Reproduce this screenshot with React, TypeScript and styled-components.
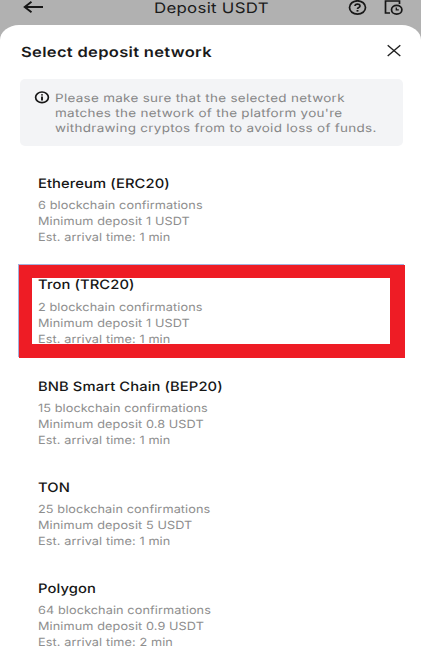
import React from "react";
import styled, { createGlobalStyle } from "styled-components";

const GlobalStyle = createGlobalStyle`
  * { box-sizing: border-box; }
  body { margin: 0; background: #b1b1b1; font-family: Inter, "Liberation Sans", sans-serif; text-rendering: geometricPrecision; }
`;

const Screen = styled.main`
  width: 421px;
  height: 669px;
  overflow: hidden;
  display: flex;
  flex-direction: column;
  background: #b1b1b1;
`;

const TopBar = styled.header`
  height: 25px;
  flex: none;
  display: grid;
  grid-template-columns: 154px 1fr auto;
  padding-right: 18px;
  color: #1b1b1b;
`;

const BackIcon = styled.svg`
  display: block;
  margin: 0 0 0 22px;
`;

const Actions = styled.div`
  display: flex;
  gap: 17px;
`;

const Wide = styled.span<{ $scale: number }>`
  display: block;
  width: max-content;
  white-space: nowrap;
  transform: scaleX(${(p) => p.$scale});
  transform-origin: 0 50%;
`;

const PageTitle = styled.div`
  padding-top: 1px;
  font-size: 14.5px;
  line-height: 16px;
  letter-spacing: 0.25px;
`;

const Sheet = styled.section`
  flex: 1;
  background: #fff;
  border-radius: 19px 19px 0 0 / 15px 15px 0 0;
  padding: 0 18px 0 20px;
`;

const SheetHeader = styled.div`
  height: 54px;
  display: flex;
  justify-content: space-between;
  padding-top: 17px;
`;

const SheetTitle = styled.h1`
  margin: 0;
  padding: 1px 0 0 0.5px;
  font-size: 14px;
  line-height: 20px;
  font-weight: 600;
  letter-spacing: 0.27px;
  color: #1a1a1a;
`;

const CloseIcon = styled.svg`
  display: block;
  margin: 2px 1px 0 0;
`;

const Notice = styled.div`
  height: 67px;
  border-radius: 5px;
  background: #f3f4f6;
  display: flex;
  padding: 11px 0 0 14px;
`;

const NoticeIcon = styled.svg`
  display: block;
  flex: none;
  margin: 1px 5px 0 0;
`;

const NoticeText = styled.div`
  padding-top: 0.7px;
  font-size: 11.5px;
  line-height: 15.2px;
  letter-spacing: 0.25px;
  color: #868686;
`;

const NetworkList = styled.div`
  padding: 29px 0 0 18px;
`;

const Network = styled.article`
  position: relative;
  height: 101.25px;
`;

const NetworkName = styled.h2`
  margin: 0;
  font-size: 13px;
  line-height: 18px;
  font-weight: 450;
  letter-spacing: 0.08px;
  color: #161616;
`;

const Details = styled.div`
  margin-top: 4.4px;
  font-size: 11.2px;
  line-height: 16px;
  letter-spacing: 0.08px;
  color: #8e8e8e;
`;

const Highlight = styled.div`
  position: absolute;
  left: -19px;
  top: -11.25px;
  width: 386px;
  height: 93px;
  border: solid #ee1c25;
  border-width: 13px 15px 14px 13px;
  box-shadow: -1px -1px 0 #a5b1dc;
`;

const networks = [
  { name: "Ethereum (ERC20)", confirmations: 6, minimum: "1", minutes: 1 },
  { name: "Tron (TRC20)", confirmations: 2, minimum: "1", minutes: 1, highlighted: true },
  { name: "BNB Smart Chain (BEP20)", confirmations: 15, minimum: "0.8", minutes: 1 },
  { name: "TON", confirmations: 25, minimum: "5", minutes: 1 },
  { name: "Polygon", confirmations: 64, minimum: "0.9", minutes: 2 },
];

export default function App() {
  return (
    <>
      <GlobalStyle />
      <Screen>
        <TopBar>
          <BackIcon width="22" height="14" viewBox="0 0 22 14" fill="none" stroke="#171717" strokeWidth="1.9">
            <path d="M21 7H2.5M9.5 1.7 2.7 7 9.5 12.3" />
          </BackIcon>
          <PageTitle><Wide $scale={1.16}>Deposit USDT</Wide></PageTitle>
          <Actions>
            <svg width="19" height="16" viewBox="0 0 19 16" fill="none" stroke="#171717" strokeWidth="1.7">
              <ellipse cx="9.5" cy="7.5" rx="8" ry="6.7" />
              <path d="M7 6.1C7 3.4 12 3.4 12 6c0 1.7-2.5 1.4-2.5 3" />
              <path d="M9.5 10v1.6" strokeWidth="1.9" />
            </svg>
            <svg width="19" height="16" viewBox="0 0 19 16" fill="none" stroke="#171717" strokeWidth="1.7">
              <path d="M15.5 4V1H1.5V13H6" />
              <ellipse cx="12.7" cy="9.7" rx="5.2" ry="4.4" />
              <path d="M12.3 7.4v2.5h2.5" strokeWidth="1.3" />
            </svg>
          </Actions>
        </TopBar>
        <Sheet>
          <SheetHeader>
            <SheetTitle><Wide $scale={1.18}>Select deposit network</Wide></SheetTitle>
            <CloseIcon width="16" height="14" viewBox="0 0 16 14" fill="none" stroke="#202020" strokeWidth="1.4">
              <path d="M1.7 1.3 14.3 12M14.3 1.3 1.7 12" />
            </CloseIcon>
          </SheetHeader>
          <Notice>
            <NoticeIcon width="16" height="13" viewBox="0 0 16 13" fill="none" stroke="#171717" strokeWidth="1.7">
              <ellipse cx="8" cy="6.3" rx="6.4" ry="5.3" />
              <path d="M8 3.2v1.4M8 5.4v4" strokeWidth="1.9" />
            </NoticeIcon>
            <NoticeText>
              <Wide $scale={1.17}>Please make sure that the selected network</Wide>
              <Wide $scale={1.17}>matches the network of the platform you're</Wide>
              <Wide $scale={1.17}>withdrawing cryptos from to avoid loss of funds.</Wide>
            </NoticeText>
          </Notice>
          <NetworkList>
            {networks.map((n) => (
              <Network key={n.name}>
                <NetworkName><Wide $scale={1.135}>{n.name}</Wide></NetworkName>
                <Details>
                  <Wide $scale={1.135}>{n.confirmations} blockchain confirmations</Wide>
                  <Wide $scale={1.135}>Minimum deposit {n.minimum} USDT</Wide>
                  <Wide $scale={1.135}>Est. arrival time: {n.minutes} min</Wide>
                </Details>
                {n.highlighted && <Highlight />}
              </Network>
            ))}
          </NetworkList>
        </Sheet>
      </Screen>
    </>
  );
}
